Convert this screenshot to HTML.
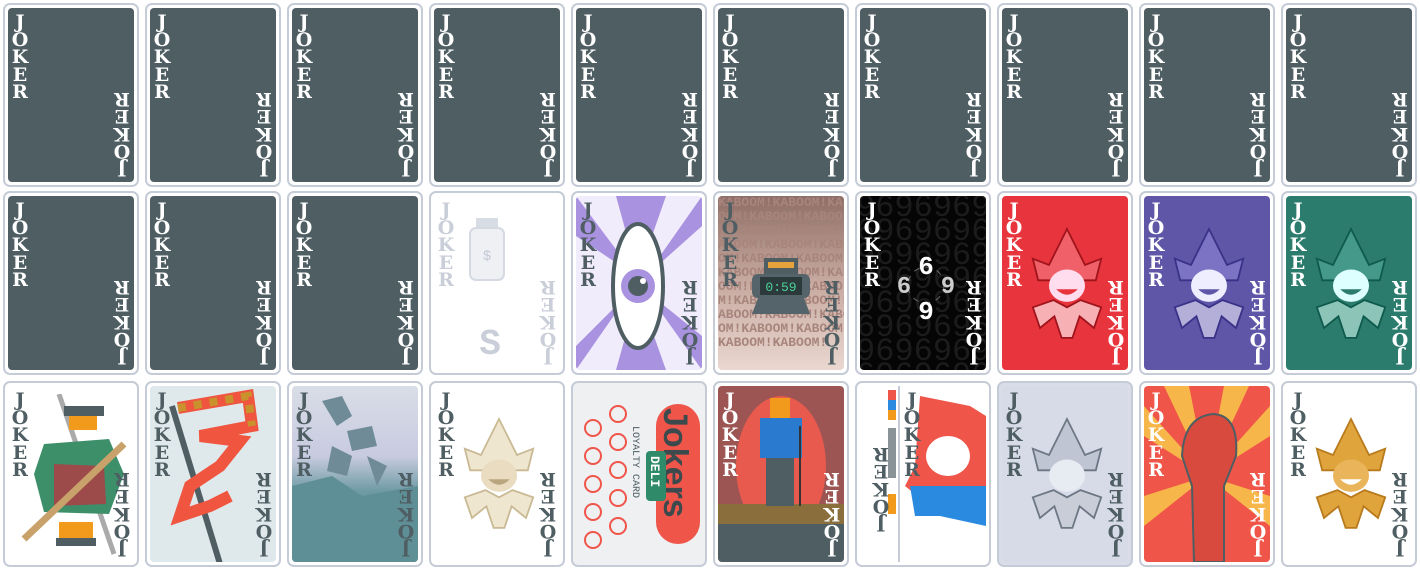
<!DOCTYPE html>
<html><head><meta charset="utf-8"><style>
body{margin:0;width:1420px;height:570px;background:#fff;position:relative;overflow:hidden}
.c{position:absolute;width:132px;height:180px;border:2px solid #c5cbd7;border-radius:7px;background:#fff}
.i{position:absolute;left:3px;top:3px;right:3px;bottom:3px;border-radius:4px;background:#4e5e63;overflow:hidden}
.t{position:absolute;left:3px;top:6px;width:18px;text-align:center;font:bold 19px/17.6px "DejaVu Serif",serif;color:#fff;z-index:3}
.b{left:auto;top:auto;right:3px;bottom:5px;transform:rotate(180deg)}
.d .t{color:#4e5e63}
svg{position:absolute}
</style></head><body>
<!-- row 1 -->
<div class="c" style="left:3px;top:3px"><div class="i"><div class="t">J<br>O<br>K<br>E<br>R</div><div class="t b">J<br>O<br>K<br>E<br>R</div></div></div>
<div class="c" style="left:145px;top:3px"><div class="i"><div class="t">J<br>O<br>K<br>E<br>R</div><div class="t b">J<br>O<br>K<br>E<br>R</div></div></div>
<div class="c" style="left:287px;top:3px"><div class="i"><div class="t">J<br>O<br>K<br>E<br>R</div><div class="t b">J<br>O<br>K<br>E<br>R</div></div></div>
<div class="c" style="left:429px;top:3px"><div class="i"><div class="t">J<br>O<br>K<br>E<br>R</div><div class="t b">J<br>O<br>K<br>E<br>R</div></div></div>
<div class="c" style="left:571px;top:3px"><div class="i"><div class="t">J<br>O<br>K<br>E<br>R</div><div class="t b">J<br>O<br>K<br>E<br>R</div></div></div>
<div class="c" style="left:713px;top:3px"><div class="i"><div class="t">J<br>O<br>K<br>E<br>R</div><div class="t b">J<br>O<br>K<br>E<br>R</div></div></div>
<div class="c" style="left:855px;top:3px"><div class="i"><div class="t">J<br>O<br>K<br>E<br>R</div><div class="t b">J<br>O<br>K<br>E<br>R</div></div></div>
<div class="c" style="left:997px;top:3px"><div class="i"><div class="t">J<br>O<br>K<br>E<br>R</div><div class="t b">J<br>O<br>K<br>E<br>R</div></div></div>
<div class="c" style="left:1139px;top:3px"><div class="i"><div class="t">J<br>O<br>K<br>E<br>R</div><div class="t b">J<br>O<br>K<br>E<br>R</div></div></div>
<div class="c" style="left:1281px;top:3px"><div class="i"><div class="t">J<br>O<br>K<br>E<br>R</div><div class="t b">J<br>O<br>K<br>E<br>R</div></div></div>
<!-- row 2 -->
<div class="c" style="left:3px;top:191px"><div class="i"><div class="t">J<br>O<br>K<br>E<br>R</div><div class="t b">J<br>O<br>K<br>E<br>R</div></div></div>
<div class="c" style="left:145px;top:191px"><div class="i"><div class="t">J<br>O<br>K<br>E<br>R</div><div class="t b">J<br>O<br>K<br>E<br>R</div></div></div>
<div class="c" style="left:287px;top:191px"><div class="i"><div class="t">J<br>O<br>K<br>E<br>R</div><div class="t b">J<br>O<br>K<br>E<br>R</div></div></div>
<div class="c" style="left:429px;top:191px"><div class="i" style="background:#fff"><div class="t" style="color:#c9ced8">J<br>O<br>K<br>E<br>R</div><div class="t b" style="color:#c9ced8">J<br>O<br>K<br>E<br>R</div>
<svg style="left:30px;top:20px" width="60" height="150"><rect x="12" y="2" width="22" height="10" fill="#d8dce4"/><rect x="6" y="12" width="34" height="52" rx="6" fill="#eef0f4" stroke="#d5d9e2" stroke-width="2"/><text x="23" y="44" font-size="14" fill="#c2c8d4" text-anchor="middle" font-family="Liberation Sans">$</text><text x="26" y="138" font-size="36" fill="#c9ced8" text-anchor="middle" font-family="Liberation Mono" font-weight="bold">S</text></svg></div></div>
<div class="c" style="left:571px;top:191px"><div class="i" style="background:#f1ecfb">
<svg style="left:0;top:0" width="126" height="174"><path d="M0 0 L60 80 L0 40Z M126 0 L70 80 L126 30Z M126 174 L70 95 L126 140Z M0 174 L55 95 L0 150Z M40 0 L62 80 L90 0Z M40 174 L62 95 L90 174Z" fill="#a992e0"/><ellipse cx="62" cy="90" rx="25" ry="62" fill="#fff" stroke="#4e5e63" stroke-width="4"/><circle cx="62" cy="90" r="17" fill="#a992e0"/><circle cx="62" cy="90" r="10" fill="#4e5e63"/><circle cx="67" cy="85" r="3" fill="#fff"/></svg>
<div class="t" style="color:#4e5e63">J<br>O<br>K<br>E<br>R</div><div class="t b" style="color:#4e5e63">J<br>O<br>K<br>E<br>R</div></div></div>
<div class="c" style="left:713px;top:191px"><div class="i" style="background:linear-gradient(#8e6e66,#c7aaa1 50%,#e9d7d0)">
<div style="position:absolute;left:0;top:0;width:140px;font:bold 13px/14px 'Liberation Mono',monospace;color:#a8857c;word-break:break-all">KABOOM!KABOOM!KABOOM!KABOOM!KABOOM!KABOOM!KABOOM!KABOOM!KABOOM!KABOOM!KABOOM!KABOOM!KABOOM!KABOOM!KABOOM!KABOOM!KABOOM!KABOOM!KABOOM!KABOOM!KABOOM!KABOOM!KABOOM!KABOOM!KABOOM!KABOOM!</div>
<svg style="left:28px;top:60px" width="70" height="60"><rect x="18" y="2" width="34" height="16" fill="#4e5e63"/><rect x="22" y="6" width="26" height="6" fill="#e8a23c"/><rect x="6" y="18" width="58" height="24" rx="6" fill="#55646a"/><rect x="14" y="21" width="42" height="18" fill="#2c3a3c"/><text x="35" y="35" font-size="13" fill="#4bd29a" text-anchor="middle" font-family="Liberation Mono">0:59</text><path d="M12 42 L58 42 L64 58 L6 58Z" fill="#55646a"/></svg>
<div class="t" style="color:#4e5e63">J<br>O<br>K<br>E<br>R</div><div class="t b" style="color:#4e5e63">J<br>O<br>K<br>E<br>R</div></div></div>
<div class="c" style="left:855px;top:191px"><div class="i" style="background:#050505">
<div style="position:absolute;left:-4px;top:0;width:140px;font:32px/24px 'Liberation Mono',monospace;color:#1c1c1c;word-break:break-all">96969696969696969696969696969696969696969696969696969696</div>
<svg style="left:36px;top:52px" width="60" height="74"><circle cx="30" cy="37" r="18" fill="none" stroke="#666" stroke-dasharray="6 6"/><text x="30" y="26" font-size="26" fill="#fff" text-anchor="middle" font-family="Liberation Mono" font-weight="bold">6</text><text x="30" y="72" font-size="26" fill="#fff" text-anchor="middle" font-family="Liberation Mono" font-weight="bold" transform="rotate(180 30 63)">6</text><text x="8" y="45" font-size="24" fill="#ccc" text-anchor="middle" font-family="Liberation Mono" font-weight="bold">6</text><text x="52" y="45" font-size="24" fill="#ccc" text-anchor="middle" font-family="Liberation Mono" font-weight="bold">9</text></svg>
<div class="t">J<br>O<br>K<br>E<br>R</div><div class="t b">J<br>O<br>K<br>E<br>R</div></div></div>
<div class="c" style="left:997px;top:191px"><div class="i" style="background:#e8343c">
<svg style="left:20px;top:22px" width="90" height="130" viewBox="0 0 100 130"><path d="M50 5 L30 45 L12 38 L18 62 L82 62 L88 38 L70 45Z" fill="#f06068" stroke="#a0141c" stroke-width="2"/><ellipse cx="50" cy="68" rx="20" ry="18" fill="#fde"/><path d="M38 72 Q50 84 62 72Z" fill="#e8343c"/><path d="M12 92 L35 84 L50 92 L65 84 L88 92 L80 115 L64 102 L56 126 L44 126 L36 102 L20 115Z" fill="#f7b0b4" stroke="#a0141c" stroke-width="2"/></svg>
<div class="t">J<br>O<br>K<br>E<br>R</div><div class="t b">J<br>O<br>K<br>E<br>R</div></div></div>
<div class="c" style="left:1139px;top:191px"><div class="i" style="background:#5f56a8">
<svg style="left:20px;top:22px" width="90" height="130" viewBox="0 0 100 130"><path d="M50 5 L30 45 L12 38 L18 62 L82 62 L88 38 L70 45Z" fill="#7d73c4" stroke="#3a3288" stroke-width="2"/><ellipse cx="50" cy="68" rx="20" ry="18" fill="#eef"/><path d="M38 72 Q50 84 62 72Z" fill="#5f56a8"/><path d="M12 92 L35 84 L50 92 L65 84 L88 92 L80 115 L64 102 L56 126 L44 126 L36 102 L20 115Z" fill="#b3afd8" stroke="#3a3288" stroke-width="2"/></svg>
<div class="t">J<br>O<br>K<br>E<br>R</div><div class="t b">J<br>O<br>K<br>E<br>R</div></div></div>
<div class="c" style="left:1281px;top:191px"><div class="i" style="background:#2c7c6e">
<svg style="left:20px;top:22px" width="90" height="130" viewBox="0 0 100 130"><path d="M50 5 L30 45 L12 38 L18 62 L82 62 L88 38 L70 45Z" fill="#45998a" stroke="#0e5a4c" stroke-width="2"/><ellipse cx="50" cy="68" rx="20" ry="18" fill="#dff"/><path d="M38 72 Q50 84 62 72Z" fill="#2c7c6e"/><path d="M12 92 L35 84 L50 92 L65 84 L88 92 L80 115 L64 102 L56 126 L44 126 L36 102 L20 115Z" fill="#8cc4b8" stroke="#0e5a4c" stroke-width="2"/></svg>
<div class="t">J<br>O<br>K<br>E<br>R</div><div class="t b">J<br>O<br>K<br>E<br>R</div></div></div>
<!-- row 3 -->
<div class="c d" style="left:3px;top:381px;height:182px"><div class="i" style="background:#fff">
<svg style="left:6px;top:8px" width="120" height="170"><path d="M45 0 L100 160" stroke="#aaa" stroke-width="5"/><rect x="50" y="12" width="40" height="10" fill="#4e5e63"/><rect x="55" y="22" width="28" height="14" fill="#f29a1c"/><path d="M30 50 L95 45 L110 80 L95 120 L30 118 L20 80Z" fill="#3d8f6a"/><path d="M40 70 L90 72 L92 110 L40 112Z" fill="#9c4a4a"/><path d="M10 145 L110 50" stroke="#c8a26a" stroke-width="7"/><rect x="45" y="128" width="34" height="16" fill="#f29a1c"/><rect x="42" y="144" width="40" height="8" fill="#4e5e63"/></svg>
<div class="t">J<br>O<br>K<br>E<br>R</div><div class="t b">J<br>O<br>K<br>E<br>R</div></div></div>
<div class="c d" style="left:145px;top:381px;height:182px"><div class="i" style="background:#dfe8ea">
<svg style="left:0;top:0" width="126" height="176"><path d="M22 20 L70 178" stroke="#4e5e63" stroke-width="6"/><path d="M28 22 L98 10 L102 40 L50 50 L90 55 L70 80 L40 100 L30 130 L60 120 L80 110" fill="none" stroke="#f0553f" stroke-width="12"/><path d="M28 22 L98 10 L102 40" fill="none" stroke="#c9922c" stroke-width="8" stroke-dasharray="8 8"/></svg>
<div class="t">J<br>O<br>K<br>E<br>R</div><div class="t b">J<br>O<br>K<br>E<br>R</div></div></div>
<div class="c d" style="left:287px;top:381px;height:182px"><div class="i" style="background:linear-gradient(#d9dde6,#c8cbe0 40%,#6d9aa3 60%,#5a8790)">
<svg style="left:0;top:0" width="126" height="176"><path d="M0 100 L40 90 L70 110 L126 100 L126 176 L0 176Z" fill="#5f8f96"/><path d="M30 15 L50 10 L60 30 L45 40Z M55 45 L80 40 L85 60 L60 65Z M40 60 L60 70 L55 90 L35 85Z M75 70 L95 80 L85 100Z" fill="#6f8b98"/></svg>
<div class="t">J<br>O<br>K<br>E<br>R</div><div class="t b">J<br>O<br>K<br>E<br>R</div></div></div>
<div class="c d" style="left:429px;top:381px;height:182px"><div class="i" style="background:#fff">
<svg style="left:20px;top:22px" width="90" height="130" viewBox="0 0 100 130"><path d="M50 5 L30 45 L12 38 L18 62 L82 62 L88 38 L70 45Z" fill="#efe6cf" stroke="#c9b994" stroke-width="2"/><ellipse cx="50" cy="68" rx="20" ry="18" fill="#e9dcc0"/><path d="M38 72 Q50 84 62 72Z" fill="#b9a67e"/><path d="M12 92 L35 84 L50 92 L65 84 L88 92 L80 115 L64 102 L56 126 L44 126 L36 102 L20 115Z" fill="#efe6cf" stroke="#c9b994" stroke-width="2"/></svg>
<div class="t">J<br>O<br>K<br>E<br>R</div><div class="t b">J<br>O<br>K<br>E<br>R</div></div></div>
<div class="c" style="left:571px;top:381px;height:182px;background:#eef0f2"><div class="i" style="background:#eef0f2">
<svg style="left:0;top:0" width="126" height="176"><g fill="none" stroke="#f0554a" stroke-width="2"><circle cx="17" cy="42" r="8"/><circle cx="17" cy="70" r="8"/><circle cx="17" cy="98" r="8"/><circle cx="17" cy="126" r="8"/><circle cx="17" cy="154" r="8"/><circle cx="42" cy="28" r="8"/><circle cx="42" cy="56" r="8"/><circle cx="42" cy="84" r="8"/><circle cx="42" cy="112" r="8"/><circle cx="42" cy="140" r="8"/></g><rect x="80" y="18" width="44" height="140" rx="22" fill="#f0554a"/><text transform="translate(88 22) rotate(90)" font-size="34" font-weight="bold" fill="#3c4a4e" font-family="Liberation Sans">Jokers</text><rect x="70" y="65" width="20" height="50" rx="4" fill="#2f8a6a"/><text transform="translate(75 70) rotate(90)" font-size="13" font-weight="bold" fill="#fff" font-family="Liberation Mono">DELI</text><text transform="translate(57 40) rotate(90)" font-size="10" fill="#4e5e63" font-family="Liberation Mono">LOYALTY CARD</text></svg></div></div>
<div class="c" style="left:713px;top:381px;height:182px"><div class="i" style="background:#9c5552">
<svg style="left:0;top:0" width="126" height="176"><ellipse cx="63" cy="80" rx="45" ry="70" fill="#e85a4e"/><rect x="0" y="118" width="126" height="20" fill="#8a6f3c"/><rect x="0" y="138" width="126" height="40" fill="#4e5e63"/><rect x="52" y="12" width="20" height="20" fill="#f29a1c"/><rect x="42" y="32" width="42" height="40" fill="#2a7ad0"/><rect x="48" y="72" width="28" height="48" fill="#4e5e63"/><path d="M82 40 L82 120" stroke="#333" stroke-width="2"/></svg>
<div class="t">J<br>O<br>K<br>E<br>R</div><div class="t b">J<br>O<br>K<br>E<br>R</div></div></div>
<div class="c d" style="left:855px;top:381px;height:182px"><div class="i" style="background:#fff">
<div style="position:absolute;left:38px;top:-3px;bottom:-3px;width:2px;background:#c5cbd7"></div>
<svg style="left:0;top:0" width="126" height="176"><rect x="28" y="4" width="8" height="10" fill="#f0554a"/><rect x="28" y="14" width="8" height="10" fill="#2a8ae0"/><rect x="28" y="24" width="8" height="10" fill="#f29a1c"/><rect x="28" y="42" width="8" height="50" fill="#8a9498"/><rect x="28" y="108" width="8" height="20" fill="#f29a1c"/><path d="M60 10 L110 20 L126 30 L126 120 L70 120 L45 100 L55 80Z" fill="#f0554a"/><ellipse cx="88" cy="70" rx="22" ry="20" fill="#fff"/><path d="M50 100 L126 100 L126 140 L80 130 L55 130Z" fill="#2a8ae0"/></svg>
<div class="t" style="left:43px">J<br>O<br>K<br>E<br>R</div><div class="t b" style="right:auto;left:12px;bottom:30px">J<br>O<br>K<br>E<br>R</div></div></div>
<div class="c d" style="left:997px;top:381px;height:182px;background:#d9dde8"><div class="i" style="background:#d6dbe7">
<svg style="left:20px;top:22px" width="90" height="130" viewBox="0 0 100 130"><path d="M50 5 L30 45 L12 38 L18 62 L82 62 L88 38 L70 45Z" fill="#bfc5d2" stroke="#6d7784" stroke-width="2"/><ellipse cx="50" cy="68" rx="20" ry="18" fill="#e7ebf2"/><path d="M12 92 L35 84 L50 92 L65 84 L88 92 L80 115 L64 102 L56 126 L44 126 L36 102 L20 115Z" fill="#c8cdd8" stroke="#6d7784" stroke-width="2"/></svg>
<div class="t">J<br>O<br>K<br>E<br>R</div><div class="t b">J<br>O<br>K<br>E<br>R</div></div></div>
<div class="c" style="left:1139px;top:381px;height:182px"><div class="i" style="background:#f0554a">
<svg style="left:0;top:0" width="126" height="176"><g fill="#f7b649"><path d="M63 90 L0 20 L0 50Z M63 90 L20 0 L45 0Z M63 90 L80 0 L105 0Z M63 90 L126 20 L126 50Z M63 90 L126 110 L126 140Z M63 90 L0 110 L0 140Z"/></g><path d="M38 70 Q40 30 70 28 Q95 30 92 70 L80 100 L80 176 L50 176 L48 100Z" fill="#d84a3e" stroke="#4e5e63" stroke-width="2"/></svg>
<div class="t">J<br>O<br>K<br>E<br>R</div><div class="t b">J<br>O<br>K<br>E<br>R</div></div></div>
<div class="c d" style="left:1281px;top:381px;height:182px"><div class="i" style="background:#fff">
<svg style="left:20px;top:22px" width="90" height="130" viewBox="0 0 100 130"><path d="M50 5 L30 45 L12 38 L18 62 L82 62 L88 38 L70 45Z" fill="#e0a43c" stroke="#b87a1c" stroke-width="2"/><ellipse cx="50" cy="68" rx="20" ry="18" fill="#eab45a"/><path d="M38 72 Q50 84 62 72Z" fill="#fff"/><path d="M12 92 L35 84 L50 92 L65 84 L88 92 L80 115 L64 102 L56 126 L44 126 L36 102 L20 115Z" fill="#e0a43c" stroke="#b87a1c" stroke-width="2"/></svg>
<div class="t">J<br>O<br>K<br>E<br>R</div><div class="t b">J<br>O<br>K<br>E<br>R</div></div></div>
</body></html>
